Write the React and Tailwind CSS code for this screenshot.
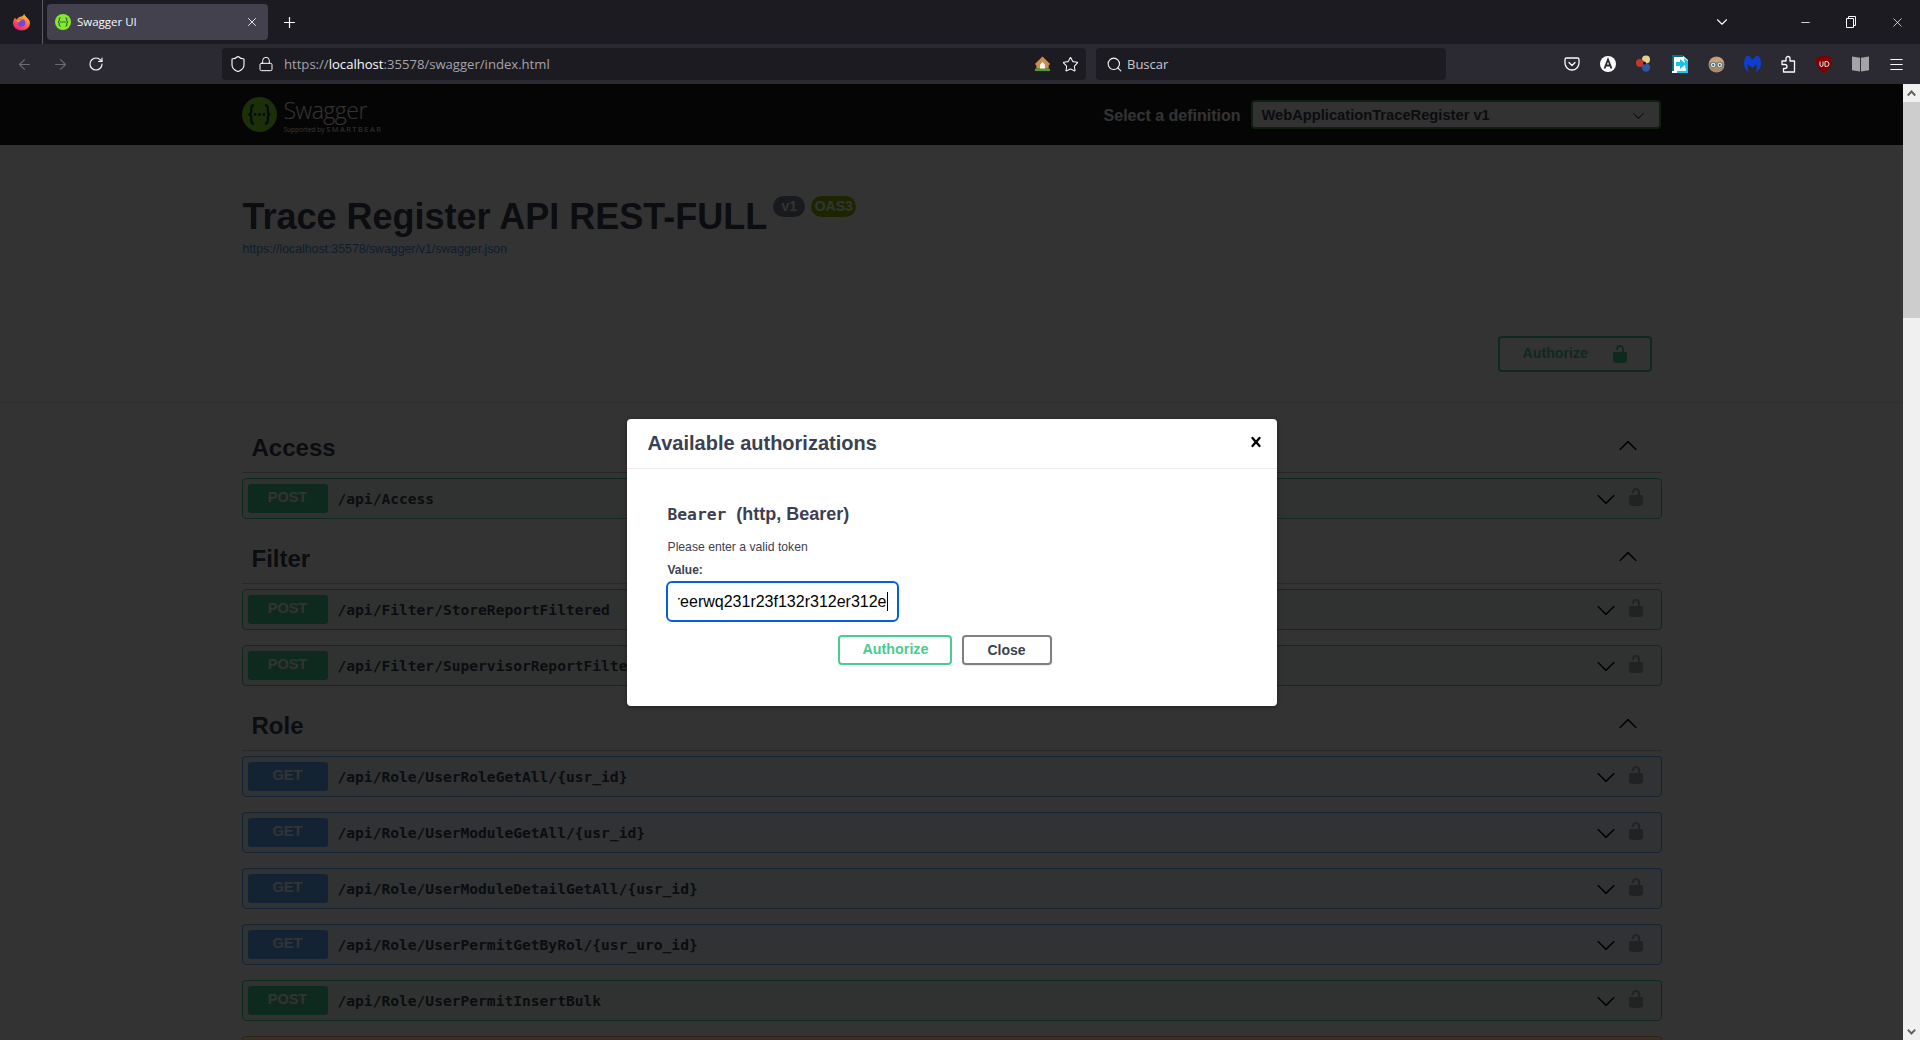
import React from "react";
import { ArrowLeft, ArrowRight, RotateCw, Shield, Lock, Star, Search, X, Plus, ChevronDown, Minus, Menu } from "lucide-react";

const sans = "font-['Liberation_Sans',Arial,sans-serif]";
const mono = "font-['DejaVu_Sans_Mono',monospace]";
const ui = "font-['Open_Sans','Noto_Sans',sans-serif]";

const sections = [
  { name: "Access", rows: [{ m: "POST", p: "/api/Access" }] },
  {
    name: "Filter",
    rows: [
      { m: "POST", p: "/api/Filter/StoreReportFiltered" },
      { m: "POST", p: "/api/Filter/SupervisorReportFiltered" },
    ],
  },
  {
    name: "Role",
    rows: [
      { m: "GET", p: "/api/Role/UserRoleGetAll/{usr_id}" },
      { m: "GET", p: "/api/Role/UserModuleGetAll/{usr_id}" },
      { m: "GET", p: "/api/Role/UserModuleDetailGetAll/{usr_id}" },
      { m: "GET", p: "/api/Role/UserPermitGetByRol/{usr_uro_id}" },
      { m: "POST", p: "/api/Role/UserPermitInsertBulk" },
      { m: "PUT", p: "/api/Role/UserPermitUpdate" },
    ],
  },
];

const rowStyle = {
  POST: { row: "border-[#49cc90] bg-[#edfaf4]", badge: "bg-[#49cc90]" },
  GET: { row: "border-[#61affe] bg-[#eff7ff]", badge: "bg-[#61affe]" },
  PUT: { row: "border-[#fca130] bg-[#fff5ea]", badge: "bg-[#fca130]" },
};

const Unlocked = ({ className }) => (
  <svg viewBox="0 0 20 20" className={className} fill="currentColor">
    <path d="M15.8 8H14V5.6C14 2.703 12.665 1 10 1 7.334 1 6 2.703 6 5.6V6h2v-.801C8 3.754 8.797 3 10 3c1.203 0 2 .754 2 2.199V8H4c-.553 0-1 .646-1 1.199V17c0 .549.428 1.139.951 1.307l1.197.387C5.672 18.861 6.55 19 7.1 19h5.8c.549 0 1.428-.139 1.951-.307l1.196-.387c.524-.167.953-.757.953-1.306V9.199C17 8.646 16.352 8 15.8 8z" />
  </svg>
);

const Arrow = ({ className }) => (
  <svg viewBox="0 0 20 20" className={className} fill="currentColor">
    <path d="M17.418 6.109c.272-.268.709-.268.979 0s.271.701 0 .969l-7.908 7.83c-.27.268-.707.268-.979 0l-7.908-7.83c-.27-.268-.27-.701 0-.969.271-.268.709-.268.979 0L10 13.25l7.418-7.141z" />
  </svg>
);

const SwaggerMark = ({ className, stroke }) => (
  <svg viewBox="0 0 32 32" className={className}>
    <circle cx="16" cy="16" r="16" fill="#85ea2d" />
    <path
      d="M11 7.5c-3 0-2.5 2.5-2.5 5 0 2-1 3.5-2.5 3.5 1.500 0 2.500 1.500 2.500 3.500 0 2.500-.5 5 2.500 5M21 7.500c3 0 2.500 2.500 2.500 5 0 2 1 3.500 2.500 3.500-1.500 0-2.500 1.500-2.500 3.500 0 2.500.5 5-2.500 5"
      fill="none"
      stroke={stroke}
      strokeWidth="2"
    />
    <circle cx="12" cy="16" r="1.300" fill={stroke} />
    <circle cx="16" cy="16" r="1.300" fill={stroke} />
    <circle cx="20" cy="16" r="1.300" fill={stroke} />
  </svg>
);

const Firefox = () => (
  <svg viewBox="0 0 20 20" className="w-[17px] h-[18px]">
    <defs>
      <linearGradient id="ff" x1="0.8" y1="0" x2="0.2" y2="1">
        <stop offset="0" stopColor="#ffd43b" />
        <stop offset="0.45" stopColor="#ff7139" />
        <stop offset="1" stopColor="#e31587" />
      </linearGradient>
    </defs>
    <path d="M13 0c.3 2.500 2 3 3.500 5 2 2 3.500 4 3.500 6.500A10 8.500 0 0 1 0 11.500C0 8.500 1 6.500 2.500 5 3 6 3.500 6.500 4.500 7 5.500 4.500 8 4 10 3.500 11.500 3 13 2 13 0z" fill="url(#ff)" />
    <circle cx="10" cy="11" r="4.500" fill="#7542e5" />
    <path d="M4 9c2-2 5-2.500 8-1.500-3 0-4.500 1-5 3-1 0-2-.5-3-1.500z" fill="#ff9a2e" />
  </svg>
);

const extensions = [
  <svg key="pocket" viewBox="0 0 16 16" className="w-4 h-4" fill="none" stroke="#fbfbfe" strokeWidth="1.300">
    <path d="M2.500 2h11A1.500 1.500 0 0 1 15 3.500V7A7 7 0 0 1 1 7V3.500A1.500 1.500 0 0 1 2.500 2z" />
    <path d="M5 6.500l3 3 3-3" strokeLinecap="round" strokeLinejoin="round" />
  </svg>,
  <svg key="a" viewBox="0 0 16 16" className="w-4 h-4">
    <circle cx="8" cy="8" r="8" fill="#fff" />
    <path d="M4.500 12.500L8 3.500l3.500 9M6 9.500h4" fill="none" stroke="#2b2a33" strokeWidth="1.800" />
  </svg>,
  <svg key="balls" viewBox="0 0 18 18" className="w-[18px] h-[18px]">
    <circle cx="11" cy="4.500" r="4" fill="#e8d28a" />
    <circle cx="5" cy="8" r="4" fill="#c0392b" />
    <circle cx="11" cy="12.500" r="4.200" fill="#2f55a4" />
    <circle cx="9.500" cy="8" r="1.500" fill="#15151a" />
  </svg>,
  <svg key="doc" viewBox="0 0 16 18" className="w-4 h-[18px]">
    <path d="M0 0h10l6 5v13H0z" fill="#fff" />
    <path d="M0 0h11v2H2v14H0z" fill="#0a6d86" />
    <path d="M12 3l4 3v12H5v-2h9z" fill="#19c4ea" />
    <path d="M4 7h4V4l6 5-6 5v-3H4z" fill="#19c4ea" />
  </svg>,
  <svg key="face" viewBox="0 0 18 18" className="w-[17px] h-[17px]">
    <circle cx="9" cy="9" r="8.500" fill="#a98a6d" />
    <path d="M1 7a8.500 8.500 0 0 1 16 0z" fill="#c9a27c" />
    <circle cx="5.500" cy="9.500" r="3" fill="#cfe7e5" stroke="#5d6f73" />
    <circle cx="12.500" cy="9.500" r="3" fill="#cfe7e5" stroke="#5d6f73" />
    <circle cx="5.500" cy="9.500" r="1" fill="#33484c" />
    <circle cx="12.500" cy="9.500" r="1" fill="#33484c" />
  </svg>,
  <svg key="mb" viewBox="0 0 18 18" className="w-[17px] h-[18px]">
    <path d="M9 4.500C11 1.500 13.500 0 15 0c2 2.500 3 5.500 3 8.500 0 4-2.500 7.500-5.500 9.500 1-2.500 1.500-5.500 1-8.500L9 13 4 9.500c-.5 3 0 6 1 8.500C2.500 16 0 12.500 0 8.500 0 5.500 1 2.500 3 0c1.500 0 4 1.500 6 4.500z" fill="#0d3ecf" />
  </svg>,
  <svg key="puzzle" viewBox="0 0 16 18" className="w-4 h-[18px]" fill="none" stroke="#fbfbfe" strokeWidth="1.300" strokeLinejoin="round">
    <path d="M2 6h4V3.500a2 2 0 0 1 4 0V6h4.500v11H3.500v-3.500h1.500a2 2 0 0 0 0-4H2z" />
  </svg>,
  <svg key="ublock" viewBox="0 0 16 18" className="w-4 h-[18px]">
    <path d="M8 0c2.500 1.500 5 2 8 2 0 7-1 12.500-8 16C1 14.500 0 9 0 2c3 0 5.500-.5 8-2z" fill="#800000" />
    <path d="M4 6.500V10a1.500 1.500 0 0 0 3 0V6.500M9 6.500v5h1.500a2.500 2.500 0 0 0 0-5z" fill="none" stroke="#eee" strokeWidth="1" />
  </svg>,
  <svg key="reader" viewBox="0 0 18 16" className="w-[17px] h-4" fill="#a3a3a8">
    <path d="M0 0l8.500 1.500V16L0 14.500zM9.500 1.500L18 0v14.500L9.500 16z" />
  </svg>,
  <Menu key="menu" className="w-[17px] h-[17px] text-[#fbfbfe]" strokeWidth={1.6} />,
];

const TabBar = () => (
  <div className="h-11 shrink-0 bg-[#1c1b22] flex items-start text-[#fbfbfe]">
    <div className="w-[43px] h-11 flex items-center justify-center border-r border-[#5b5b66]">
      <Firefox />
    </div>
    <div className="ml-1 mt-1 w-[221px] h-9 rounded-[4px] bg-[#42414d] flex items-center pl-2">
      <SwaggerMark className="w-4 h-4" stroke="#173647" />
      <span className={`ml-[6px] text-[11.500px] ${ui}`}>Swagger UI</span>
      <X className="w-[14px] h-[14px] ml-auto mr-[9px]" strokeWidth={1.5} />
    </div>
    <div className="ml-[5px] w-8 h-11 flex items-center justify-center">
      <Plus className="w-[17px] h-[17px]" strokeWidth={1.7} />
    </div>
    <div className="ml-auto mr-[44px] w-8 h-11 flex items-center justify-center">
      <ChevronDown className="w-[18px] h-[18px]" strokeWidth={1.5} />
    </div>
    <div className="w-[46px] h-[44px] flex items-center justify-center">
      <Minus className="w-[13px] h-[13px]" strokeWidth={1.5} />
    </div>
    <div className="w-[46px] h-[44px] flex items-center justify-center">
      <svg viewBox="0 0 10 12" className="w-[10px] h-3" fill="none" stroke="currentColor">
        <path d="M.5 2.500h7v9h-7zM2.500 2.500v-2h7v9h-2" />
      </svg>
    </div>
    <div className="w-[46px] h-[44px] flex items-center justify-center">
      <X className="w-[15px] h-[15px]" strokeWidth={1.2} />
    </div>
  </div>
);

const Toolbar = () => (
  <div className="h-10 shrink-0 bg-[#2b2a33] flex items-center pl-[6px] pr-[6px] text-[#fbfbfe]">
    <div className="w-9 flex justify-center">
      <ArrowLeft className="w-[17px] h-[17px] text-[#6d6c75]" strokeWidth={1.5} />
    </div>
    <div className="w-9 flex justify-center">
      <ArrowRight className="w-[17px] h-[17px] text-[#6d6c75]" strokeWidth={1.5} />
    </div>
    <div className="w-9 flex justify-center">
      <RotateCw className="w-[16px] h-[16px]" strokeWidth={1.7} />
    </div>
    <div className="ml-[108px] w-[864px] h-8 rounded-[4px] bg-[#1c1b22] flex items-center">
      <Shield className="ml-[7px] w-[18px] h-[18px]" strokeWidth={1.5} />
      <Lock className="ml-[11px] w-4 h-4" strokeWidth={1.5} />
      <span className={`ml-[10px] pt-[2px] text-[13.100px] text-[#a4a4aa] ${ui}`}>
        https://<span className="text-[#fbfbfe]">localhost</span>:35578/swagger/index.html
      </span>
      <svg viewBox="0 0 18 18" className="ml-auto w-[17px] h-[18px]">
        <path d="M9 1l8 8-1.500 1.500V14h-13v-3.500L1 9z" fill="#c98d4d" />
        <path d="M6.500 14V9.500L9 7l2.500 2.500V14z" fill="#fff" />
        <path d="M1 14h16v2.500H1z" fill="#4e9a33" />
      </svg>
      <Star className="ml-[11px] mr-[7px] w-[17px] h-[17px]" strokeWidth={1.5} />
    </div>
    <div className="ml-[10px] w-[350px] h-8 rounded-[4px] bg-[#1c1b22] flex items-center">
      <Search className="ml-[10px] w-[17px] h-[17px]" strokeWidth={1.5} />
      <span className={`ml-1 pt-[2px] text-[13px] text-[#c8c8cc] ${ui}`}>Buscar</span>
    </div>
    <div className="ml-auto flex">
      {extensions.map((icon, i) => (
        <div key={i} className="w-9 flex justify-center items-center">
          {icon}
        </div>
      ))}
    </div>
  </div>
);

const Topbar = () => (
  <div className="h-[61px] bg-[#1b1b1b]">
    <div className="w-[1420px] mx-auto h-full flex items-center">
      <SwaggerMark className="w-[35px] h-[35px]" stroke="#173647" />
      <div className="ml-[7px] flex flex-col text-white">
        <span className={`text-[23px] leading-[29px] font-light tracking-[-0.5px] ${ui}`}>Swagger</span>
        <span className={`text-[6.500px] leading-[9px] ${ui}`}>
          Supported by <span className="text-[7.500px] tracking-[1.500px]">SMARTBEAR</span>
        </span>
      </div>
      <span className={`ml-auto pt-[2px] text-white font-bold text-[16px] ${sans}`}>Select a definition</span>
      <div className={`ml-[10px] w-[410px] h-[29px] rounded-[4px] border-2 border-[#41a047] bg-[#f7f7f7] flex items-center pl-[9px] pt-[2px] text-[#3b4151] font-bold text-[14.700px] ${sans}`}>
        WebApplicationTraceRegister v1
        <Arrow className="ml-auto mr-[14px] w-[13px] h-[13px]" />
      </div>
      <div className="w-px" />
    </div>
  </div>
);

const Info = () => (
  <div className="border-b border-[#3b41511a]">
    <div className={`w-[1420px] mx-auto pt-[50px] pb-[30px] text-[#3b4151] ${sans}`}>
      <div className="flex items-start pl-px">
        <h2 className="text-[36px] leading-[44px] font-bold">Trace Register API REST-FULL</h2>
        <span className="ml-[6px] mt-px h-[21px] w-8 rounded-[57px] bg-[#7d8492] text-white text-[14px] font-bold flex items-center justify-center">v1</span>
        <span className="ml-[6px] mt-px h-[21px] w-[45px] rounded-[57px] bg-[#89bf04] text-white text-[14px] font-bold flex items-center justify-center">OAS3</span>
      </div>
      <div className="mt-[2px] pl-px text-[12.300px] leading-4 text-[#4990e2]">https://localhost:35578/swagger/v1/swagger.json</div>
      <div className="mt-[79px] flex justify-end pr-[10px]">
        <div className="w-[154px] h-9 rounded-[4px] border-2 border-[#49cc90] flex items-center pl-[23px] gap-[22px] text-[#49cc90] font-bold text-[14.200px]">
          Authorize
          <Unlocked className="w-5 h-5" />
        </div>
      </div>
    </div>
  </div>
);

const Operation = ({ m, p }) => (
  <div className={`h-[41px] mb-[15px] rounded-[4px] border flex items-center pl-[5px] pr-[15px] ${rowStyle[m].row}`}>
    <span className={`w-20 h-[29px] pb-[2px] rounded-[3px] text-white text-[14.500px] font-bold flex items-center justify-center ${rowStyle[m].badge} ${sans}`}>{m}</span>
    <span className={`ml-[10px] text-[14.600px] font-bold text-[#3b4151] ${mono}`}>{p}</span>
    <Arrow className="ml-auto w-5 h-5 text-black" />
    <Unlocked className="ml-[10px] -mt-1 w-5 h-5 text-[#aaaaaa]" />
  </div>
);

const Sections = () => (
  <div className="w-[1420px] mx-auto pt-[19px]">
    {sections.map((s) => (
      <div key={s.name} className="-mb-px">
        <div className="h-[51px] mb-[5px] pt-px pl-[10px] pr-[24px] border-b border-[#3b41514d] flex items-center justify-between">
          <h3 className={`text-[24px] font-bold text-[#3b4151] ${sans}`}>{s.name}</h3>
          <Arrow className="w-5 h-5 text-black rotate-180 -mt-1" />
        </div>
        {s.rows.map((r) => (
          <Operation key={r.p} m={r.m} p={r.p} />
        ))}
      </div>
    ))}
  </div>
);

const AuthModal = () => (
  <div className="absolute inset-0 bg-black/80 flex justify-center items-start pt-[335px]">
    <div className={`w-[650px] h-[287px] rounded-[4px] bg-white shadow-[0_1px_4px_rgba(0,0,0,.4)] text-[#3b4151] ${sans}`}>
      <div className="h-[50px] pb-[2px] pl-[21px] pr-[11px] border-b border-[#ebebeb] flex items-center justify-between">
        <h3 className="text-[20px] font-bold">Available authorizations</h3>
        <svg viewBox="0 0 20 20" className="w-5 h-5 -mt-[2px] text-black" fill="currentColor">
          <path d="M14.348 14.849a1.200 1.200 0 0 1-1.697 0L10 11.819l-2.651 3.029a1.200 1.200 0 1 1-1.697-1.697l2.758-3.150-2.759-3.152a1.200 1.200 0 1 1 1.697-1.697L10 8.183l2.651-3.031a1.200 1.200 0 1 1 1.697 1.697l-2.758 3.152 2.758 3.150a1.200 1.200 0 0 1 0 1.698z" />
        </svg>
      </div>
      <div className="pt-[35px] pl-[41px]">
        <h4 className="text-[18px] leading-5 font-bold">
          <code className={`text-[16.300px] font-bold ${mono}`}>Bearer</code>
          <span className="ml-[10px]">(http, Bearer)</span>
        </h4>
        <p className="mt-[14px] text-[12.200px] leading-4">Please enter a valid token</p>
        <div className="mt-[7px] text-[12px] leading-4 font-bold">Value:</div>
        <div className="mt-[3px] w-[233px] h-[41px] -ml-[2px] rounded-[6px] border-2 border-[#0060df] pl-[10px] pr-[9px] flex items-center">
          <div className="flex-1 overflow-hidden flex justify-end whitespace-nowrap text-[16px] text-black">
            <span>321reerwq231r23f132r312er312e</span>
          </div>
          <div className="w-px h-[19px] bg-black" />
        </div>
        <div className="mt-[13px] ml-[170px] flex gap-[10px]">
          <div className="w-[114px] h-[30px] pl-[2px] rounded-[4px] border-2 border-[#49cc90] text-[#49cc90] text-[14.300px] font-bold flex items-center justify-center">Authorize</div>
          <div className="w-[90px] h-[30px] rounded-[4px] border-2 border-[#808080] shadow-[0_1px_2px_rgba(0,0,0,.1)] text-[14px] font-bold flex items-center justify-center">Close</div>
        </div>
      </div>
    </div>
  </div>
);

const Scrollbar = () => (
  <div className="w-[17px] shrink-0 bg-[#f0f0f0] flex flex-col">
    <div className="h-[18px] flex items-center justify-center">
      <svg viewBox="0 0 10 8" className="w-[9px] h-[7px]" fill="#606060"><path d="M5 0l5 5.500-1.500 1.500L5 3.500 1.500 7 0 5.500z" /></svg>
    </div>
    <div className="h-[216px] bg-[#cdcdcd]" />
    <div className="mt-auto h-[17px] flex items-center justify-center">
      <svg viewBox="0 0 10 8" className="w-[9px] h-[7px] rotate-180" fill="#606060"><path d="M5 0l5 5.500-1.500 1.500L5 3.500 1.500 7 0 5.500z" /></svg>
    </div>
  </div>
);

export default function App() {
  return (
    <div className="w-[1920px] h-[1040px] overflow-hidden flex flex-col">
      <TabBar />
      <Toolbar />
      <div className="flex-1 min-h-0 flex">
        <div className="relative flex-1 overflow-hidden bg-white">
          <Topbar />
          <Info />
          <Sections />
          <AuthModal />
        </div>
        <Scrollbar />
      </div>
    </div>
  );
}
